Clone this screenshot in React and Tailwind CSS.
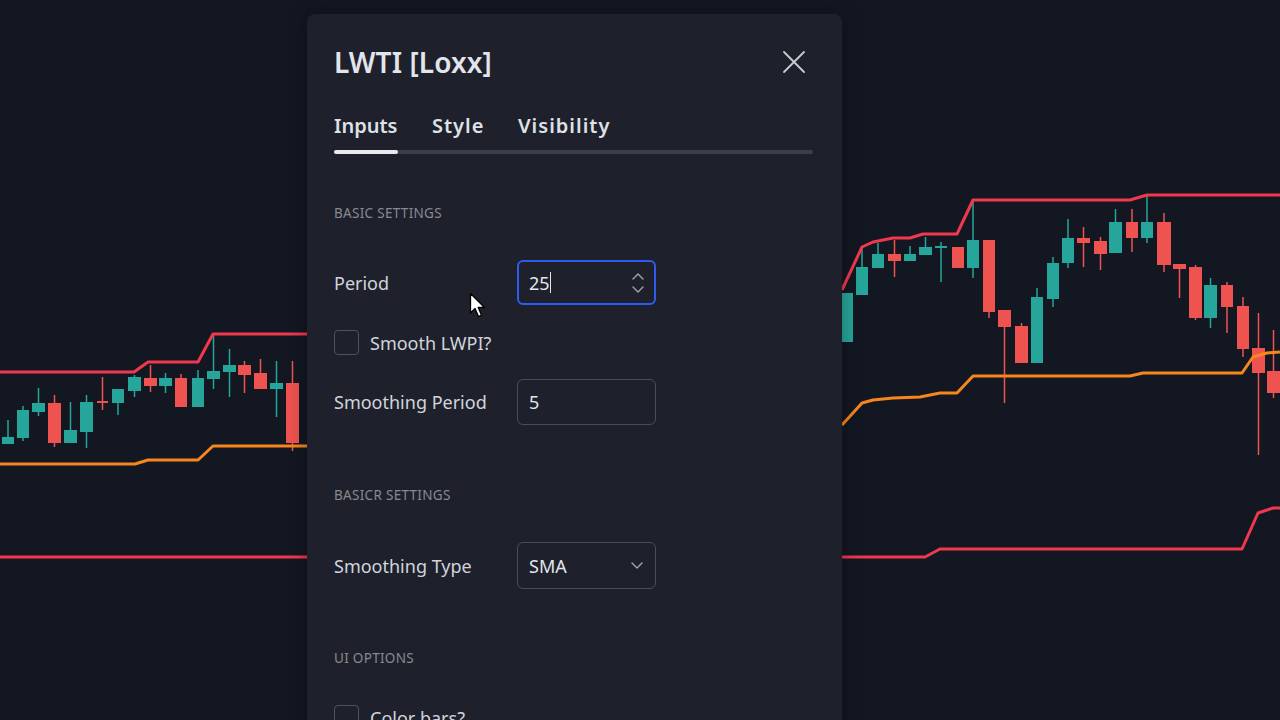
import React from "react";

const GREEN = "#26a69a";
const RED = "#ef5350";
const BAND = "#f0384f";
const ORANGE = "#f7861c";

// [x0, x1, bodyTop, bodyBottom, wickTop, wickBottom, color]
const leftCandles = [
	[2, 14, 437, 444, 420, 444, "g"],
	[17, 29, 410, 438, 406, 441, "g"],
	[32, 45, 403, 412, 388, 416, "g"],
	[48, 61, 403, 443, 395, 447, "r"],
	[64, 77, 430, 443, 402, 443, "g"],
	[80, 93, 402, 432, 395, 448, "g"],
	[97, 108, 401, 403, 377, 410, "r"],
	[112, 124, 389, 403, 389, 415, "g"],
	[128, 141, 377, 391, 375, 397, "g"],
	[144, 157, 378, 386, 365, 392, "r"],
	[159, 172, 378, 386, 373, 393, "g"],
	[175, 187, 378, 407, 374, 407, "r"],
	[192, 204, 378, 407, 370, 407, "g"],
	[207, 220, 371, 379, 335, 389, "g"],
	[223, 236, 365, 372, 349, 397, "g"],
	[238, 251, 365, 375, 361, 393, "r"],
	[254, 267, 373, 389, 359, 389, "r"],
	[270, 283, 383, 389, 361, 417, "g"],
	[286, 299, 383, 443, 361, 451, "r"],
];

const rightCandles = [
	[842, 853, 293, 342, 293, 342, "g"],
	[856, 868, 267, 295, 247, 295, "g"],
	[872, 884, 254, 268, 243, 268, "g"],
	[888, 901, 254, 261, 240, 277, "r"],
	[904, 916, 254, 261, 246, 261, "g"],
	[919, 932, 247, 255, 237, 255, "g"],
	[935, 947, 246, 248, 242, 282, "g"],
	[952, 964, 247, 268, 247, 268, "r"],
	[967, 979, 240, 268, 200, 278, "g"],
	[983, 995, 240, 312, 240, 318, "r"],
	[998, 1011, 310, 327, 310, 403, "r"],
	[1015, 1028, 326, 363, 323, 363, "r"],
	[1031, 1043, 297, 363, 288, 363, "g"],
	[1047, 1059, 263, 299, 257, 307, "g"],
	[1062, 1074, 238, 263, 219, 268, "g"],
	[1077, 1090, 238, 243, 227, 267, "r"],
	[1094, 1107, 241, 254, 237, 270, "r"],
	[1109, 1122, 222, 253, 209, 253, "g"],
	[1126, 1138, 222, 238, 209, 252, "r"],
	[1141, 1153, 222, 238, 195, 243, "g"],
	[1157, 1171, 222, 265, 213, 272, "r"],
	[1173, 1186, 264, 269, 264, 298, "r"],
	[1189, 1202, 267, 318, 265, 320, "r"],
	[1204, 1217, 285, 318, 278, 328, "g"],
	[1221, 1233, 285, 307, 282, 333, "r"],
	[1237, 1249, 306, 349, 297, 357, "r"],
	[1252, 1265, 348, 373, 313, 455, "r"],
	[1267, 1280, 371, 393, 330, 398, "r"],
];

const Candle = ({ c }) => {
	const [x0, x1, bt, bb, wt, wb, k] = c;
	const col = k === "g" ? GREEN : RED;
	const cx = (x0 + x1) / 2;
	return (
		<g>
			<line x1={cx} x2={cx} y1={wt} y2={wb} stroke={col} strokeWidth="1.5" />
			<rect x={x0} y={bt} width={x1 - x0} height={Math.max(bb - bt, 2)} fill={col} />
		</g>
	);
};

const Chart = () => (
	<svg className="absolute inset-0" width="1280" height="720" viewBox="0 0 1280 720">
		{leftCandles.concat(rightCandles).map((c, i) => (
			<Candle key={i} c={c} />
		))}
		{/* left side bands */}
		<polyline points="0,372 134,372 148,362 198,362 213,334 310,334" fill="none" stroke={BAND} strokeWidth="3" strokeLinejoin="round" />
		<polyline points="0,464 135,464 148,460 198,460 213,446 310,446" fill="none" stroke={ORANGE} strokeWidth="3" strokeLinejoin="round" />
		<polyline points="0,557 310,557" fill="none" stroke={BAND} strokeWidth="3" />
		{/* right side bands */}
		<polyline points="842,290 862,247 873,242 893,238 910,238 923,234 957,234 973,200 1130,200 1147,195 1280,195" fill="none" stroke={BAND} strokeWidth="3" strokeLinejoin="round" />
		<polyline points="842,425 862,403 873,400 893,398 920,397 940,393 957,393 973,376 1130,376 1143,373 1242,373 1253,357 1267,353 1280,352" fill="none" stroke={ORANGE} strokeWidth="3" strokeLinejoin="round" />
		<polyline points="840,557 925,557 940,549 1242,549 1258,513 1273,508 1280,508" fill="none" stroke={BAND} strokeWidth="3" strokeLinejoin="round" />
	</svg>
);

const Chevron = ({ up, className }) => (
	<svg className={className} width="12" height="8" viewBox="0 0 12 8" fill="none">
		<path d={up ? "M1 7 L6 2 L11 7" : "M1 1 L6 6 L11 1"} stroke="#a3a6af" strokeWidth="1.4" strokeLinecap="round" strokeLinejoin="round" />
	</svg>
);

const SectionTitle = ({ children, className }) => (
	<div className={`text-[13.5px] leading-4 tracking-[0.3px] text-[#868993] uppercase ${className}`}>{children}</div>
);

const Checkbox = ({ label, className }) => (
	<div className={`flex items-center gap-[11px] ${className}`}>
		<div className="w-[25px] h-[25px] rounded-[4px] border border-[#4f525c]" />
		<span className="text-[18px] leading-6 text-[#d1d4dc]">{label}</span>
	</div>
);

const Row = ({ label, children, className }) => (
	<div className={`flex items-center ${className}`}>
		<div className="w-[183px] text-[18px] leading-6 text-[#d1d4dc]">{label}</div>
		{children}
	</div>
);

const Cursor = () => (
	<svg className="absolute left-[469px] top-[292px]" width="18" height="27" viewBox="0 0 18 27">
		<path d="M1.5 1.5 L1.5 21 L6 16.5 L9.5 24.5 L12.5 23.2 L9.2 15.5 L15.5 15.5 Z" fill="#ffffff" stroke="#000000" strokeWidth="1.3" strokeLinejoin="round" />
	</svg>
);

export default function App() {
	return (
		<div
			className="relative w-[1280px] h-[720px] overflow-hidden bg-[#131722]"
			style={{ fontFamily: '"Noto Sans", "Open Sans", sans-serif' }}
		>
			<Chart />

			{/* settings dialog */}
			<div className="absolute left-[307px] top-[14px] w-[535px] h-[740px] rounded-[8px] bg-[#1e212b] pl-[27px] pr-[29px] pt-[32px] shadow-[0_0_20px_rgba(0,0,0,0.35)]">
				<div className="flex items-center justify-between h-8">
					<h1 className="text-[28px] leading-8 font-semibold text-[#e3e5ec] tracking-[0.1px]">LWTI [Loxx]</h1>
					<svg className="mr-[7px]" width="24" height="24" viewBox="0 0 24 24" fill="none">
						<path d="M2 2 L22 22 M22 2 L2 22" stroke="#c9ccd4" strokeWidth="1.8" strokeLinecap="round" />
					</svg>
				</div>

				<div className="mt-[34px] flex text-[20px] leading-7 font-semibold text-[#dfe1e8]">
					<span className="w-[98px]">Inputs</span>
					<span className="w-[86px] tracking-[1px]">Style</span>
					<span className="tracking-[1px]">Visibility</span>
				</div>
				<div className="mt-[10px] h-[4px] w-[479px] rounded-full bg-[#3b3e48] flex">
					<div className="w-[64px] h-full rounded-full bg-[#e8eaf0]" />
				</div>

				<SectionTitle className="mt-[51px]">Basic Settings</SectionTitle>

				<Row label="Period" className="mt-[39px]">
					<div className="w-[139px] h-[45px] rounded-[6px] border-2 border-[#2f5cf0] flex items-center justify-between pl-[10px] pr-[10px]">
						<div className="flex items-center">
							<span className="text-[18px] leading-6 text-[#e3e5ec]">25</span>
							<span className="w-[1.5px] h-[21px] bg-[#e3e5ec]" />
						</div>
						<div className="flex flex-col gap-[6px]">
							<Chevron up />
							<Chevron />
						</div>
					</div>
				</Row>

				<Checkbox label="Smooth LWPI?" className="mt-[25px]" />

				<Row label="Smoothing Period" className="mt-[24px]">
					<div className="w-[139px] h-[46px] rounded-[6px] border border-[#4a4d57] flex items-center pl-[11px]">
						<span className="text-[18px] leading-6 text-[#e3e5ec]">5</span>
					</div>
				</Row>

				<SectionTitle className="mt-[62px]">Basicr Settings</SectionTitle>

				<Row label="Smoothing Type" className="mt-[39px]">
					<div className="w-[139px] h-[47px] rounded-[6px] border border-[#4a4d57] flex items-center justify-between pl-[11px] pr-[12px]">
						<span className="text-[18px] leading-6 text-[#e3e5ec]">SMA</span>
						<Chevron />
					</div>
				</Row>

				<SectionTitle className="mt-[61px]">UI Options</SectionTitle>

				<Checkbox label="Color bars?" className="mt-[39px]" />
			</div>

			<Cursor />
		</div>
	);
}
